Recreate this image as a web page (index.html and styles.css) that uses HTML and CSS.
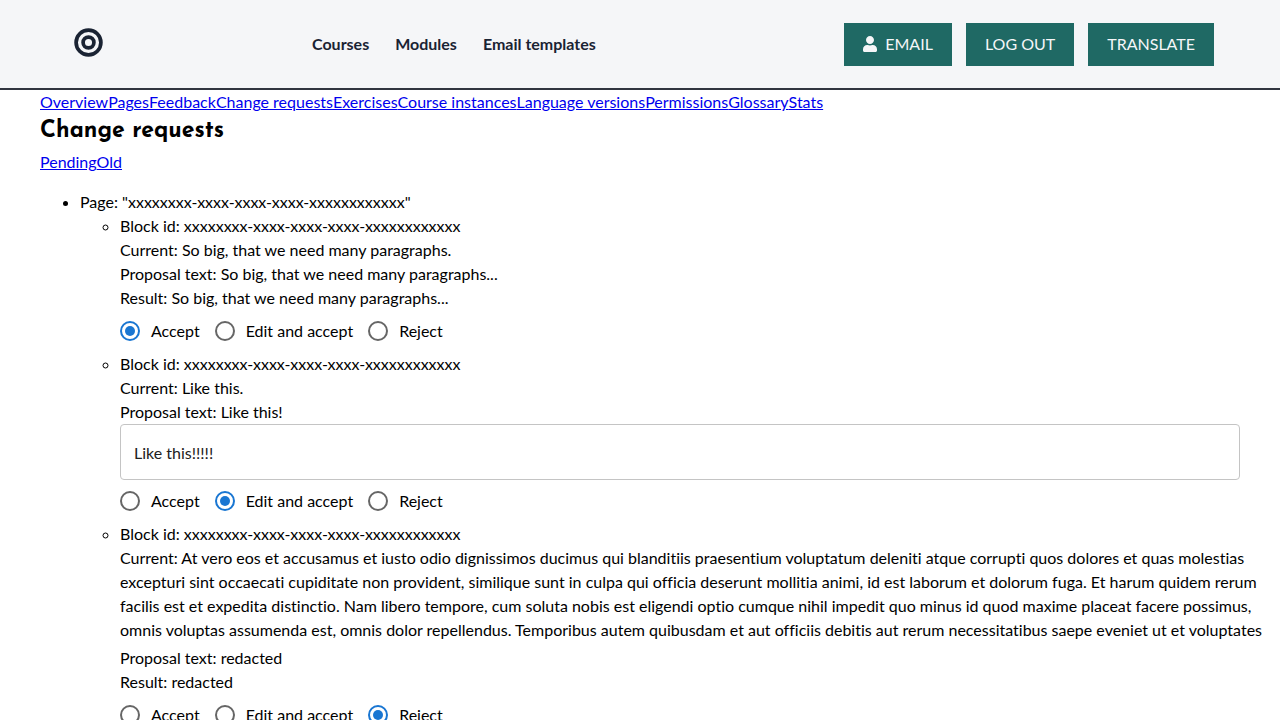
FILE: index.html
```html
<!DOCTYPE html>
<html lang="en">
<head>
<meta charset="utf-8">
<meta name="viewport" content="width=device-width, initial-scale=1">
<title>Change requests</title>
<link rel="stylesheet" href="styles.css">
</head>
<body>
<header class="topbar">
  <a class="logo" href="#" aria-label="Home">
    <svg viewBox="0 0 30 30" width="30" height="30" aria-hidden="true"><g fill="none" stroke="#1a2333"><circle cx="14.500" cy="14.500" r="12.400" stroke-width="3.700"/><circle cx="14.500" cy="14.500" r="5.400" stroke-width="3.700"/></g></svg>
  </a>
  <nav class="main-nav" aria-label="Main">
    <a href="#">Courses</a>
    <a href="#">Modules</a>
    <a href="#">Email templates</a>
  </nav>
  <div class="actions">
    <button class="btn" type="button"><svg class="user" viewBox="0 0 448 512" width="14" height="16" aria-hidden="true"><path fill="currentColor" d="M224 256c70.700 0 128-57.300 128-128S294.700 0 224 0 96 57.300 96 128s57.300 128 128 128zm89.600 32h-16.700c-22.200 10.200-46.900 16-72.900 16s-50.600-5.800-72.900-16h-16.700C60.200 288 0 348.200 0 422.400V464c0 26.500 21.500 48 48 48h352c26.500 0 48-21.500 48-48v-41.600c0-74.200-60.200-134.400-134.400-134.400z"/></svg>Email</button>
    <button class="btn" type="button">Log out</button>
    <button class="btn" type="button">Translate</button>
  </div>
</header>
<main class="content">
  <nav class="tabs" aria-label="Course sections"><a href="#">Overview</a><a href="#">Pages</a><a href="#">Feedback</a><a href="#">Change requests</a><a href="#">Exercises</a><a href="#">Course instances</a><a href="#">Language versions</a><a href="#">Permissions</a><a href="#">Glossary</a><a href="#">Stats</a></nav>
  <h1 class="title">Change requests</h1>
  <nav class="tabs" aria-label="Request status"><a href="#">Pending</a><a href="#">Old</a></nav>
  <ul class="pages">
    <li>Page: "xxxxxxxx-xxxx-xxxx-xxxx-xxxxxxxxxxxx"
      <ul class="blocks">
        <li>
          <div>Block id: xxxxxxxx-xxxx-xxxx-xxxx-xxxxxxxxxxxx</div>
          <div>Current: So big, that we need many paragraphs.</div>
          <div>Proposal text: So big, that we need many paragraphs...</div>
          <div>Result: So big, that we need many paragraphs...</div>
          <div class="choices" role="radiogroup" aria-label="Decision">
            <label class="choice"><input type="radio" name="block-1" checked>Accept</label>
            <label class="choice"><input type="radio" name="block-1">Edit and accept</label>
            <label class="choice"><input type="radio" name="block-1">Reject</label>
          </div>
        </li>
        <li>
          <div>Block id: xxxxxxxx-xxxx-xxxx-xxxx-xxxxxxxxxxxx</div>
          <div>Current: Like this.</div>
          <div>Proposal text: Like this!</div>
          <input class="edit" type="text" value="Like this!!!!!" aria-label="Edited text">
          <div class="choices" role="radiogroup" aria-label="Decision">
            <label class="choice"><input type="radio" name="block-2">Accept</label>
            <label class="choice"><input type="radio" name="block-2" checked>Edit and accept</label>
            <label class="choice"><input type="radio" name="block-2">Reject</label>
          </div>
        </li>
        <li>
          <div>Block id: xxxxxxxx-xxxx-xxxx-xxxx-xxxxxxxxxxxx</div>
          <div class="long">Current: At vero eos et accusamus et iusto odio dignissimos ducimus qui blanditiis praesentium voluptatum deleniti atque corrupti quos dolores et quas molestias excepturi sint occaecati cupiditate non provident, similique sunt in culpa qui officia deserunt mollitia animi, id est laborum et dolorum fuga. Et harum quidem rerum facilis est et expedita distinctio. Nam libero tempore, cum soluta nobis est eligendi optio cumque nihil impedit quo minus id quod maxime placeat facere possimus, omnis voluptas assumenda est, omnis dolor repellendus. Temporibus autem quibusdam et aut officiis debitis aut rerum necessitatibus saepe eveniet ut et voluptates</div>
          <div>Proposal text: redacted</div>
          <div>Result: redacted</div>
          <div class="choices" role="radiogroup" aria-label="Decision">
            <label class="choice"><input type="radio" name="block-3">Accept</label>
            <label class="choice"><input type="radio" name="block-3">Edit and accept</label>
            <label class="choice"><input type="radio" name="block-3" checked>Reject</label>
          </div>
        </li>
      </ul>
    </li>
  </ul>
</main>
</body>
</html>
```
FILE: styles.css
```css
*, *::before, *::after { box-sizing: border-box; }

html { scrollbar-width: none; }

body {
  margin: 0;
  background: #fff;
  color: #000;
  font: 16px/24px Lato, sans-serif;
  font-variant-ligatures: none;
}

.topbar {
  display: flex;
  align-items: center;
  justify-content: space-between;
  padding: 23px 66px 22px 74px;
  background: #f5f6f8;
  border-bottom: 2px solid #313540;
}

.logo { display: flex; padding-bottom: 4px; }

.main-nav {
  display: flex;
  flex: 1;
  gap: 26px;
  margin-left: 208px;
  padding-bottom: 2px;
}

.main-nav a {
  color: #1a2333;
  font-weight: 700;
  text-decoration: none;
}

.actions { display: flex; gap: 14px; }

.btn {
  display: flex;
  align-items: center;
  gap: 8px;
  padding: 8px 18px 10px;
  border: 1px solid #1f6964;
  border-radius: 0;
  background: #1f6964;
  color: #f5f6f8;
  font: 16px/23px Lato, sans-serif;
  text-transform: uppercase;
}

.content { padding: 0 40px; }

.tabs { display: flex; }

.tabs a { color: #0000ee; }

.title {
  margin: 0;
  font: 700 23px/36px "Josefin Sans", Lato, sans-serif;
}

.pages { margin: 16px 0; padding-left: 40px; }

.blocks { margin: 0; padding-left: 40px; }

.choices {
  display: flex;
  gap: 15px;
  padding: 9px 0;
}

.choice { display: flex; align-items: center; gap: 11px; }

.choice input {
  display: grid;
  place-content: center;
  appearance: none;
  width: 20px;
  height: 20px;
  margin: 0;
  border: 2px solid #666;
  border-radius: 50%;
}

.choice input:checked { border-color: #1976d2; }

.choice input:checked::before {
  content: "";
  width: 10px;
  height: 10px;
  border-radius: 50%;
  background: #1976d2;
}

.edit {
  display: block;
  width: 100%;
  height: 56px;
  padding: 0 13px;
  border: 1px solid #c4c4c4;
  border-radius: 4px;
  background: #fff;
  color: #212121;
  font: 16px/24px Lato, sans-serif;
}

.long {
  margin-right: -28px;
  margin-bottom: 4px;
}
```
